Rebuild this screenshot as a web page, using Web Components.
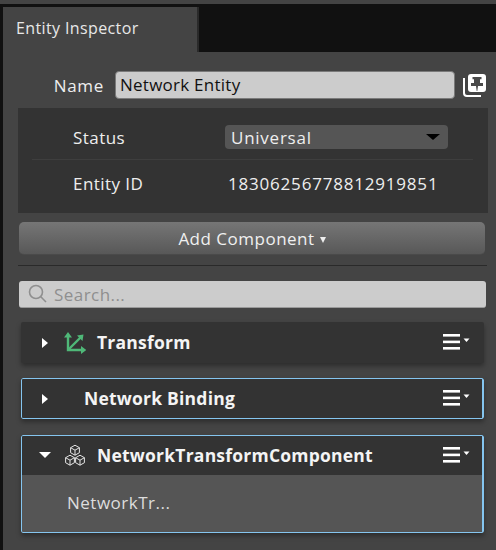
<!DOCTYPE html>
<html><head><meta charset="utf-8"><style>
html,body{margin:0;padding:0;width:496px;height:550px;overflow:hidden;background:#111;font-family:"Open Sans",sans-serif;color:#fff}
</style></head><body>
<ei-app></ei-app>
<script>
const def=(n,css,html)=>{customElements.define(n,class extends HTMLElement{connectedCallback(){if(this.shadowRoot)return;const s=this.attachShadow({mode:'open'});s.innerHTML='<style>'+css+'</style>'+(typeof html==='function'?html(this):html)}})};
const kebab=`<svg width="32" height="17" viewBox="0 0 32 17" style="display:block"><rect x="0" y="0" width="17" height="2.6" fill="#fff"/><rect x="0" y="6.6" width="17" height="2.6" fill="#fff"/><rect x="0" y="13" width="17" height="2.6" fill="#fff"/><path d="M20.5 4.5h6l-3 3.4z" fill="#fff"/></svg>`;
const icons={
 transform:`<svg width="22" height="22" viewBox="0 0 22 22" style="display:block"><g fill="none" stroke="#4fb878" stroke-width="2.4"><path d="M4 4v14h15"/><path d="M4 18L16.500 5.500"/></g><path d="M4 0l4 5.500h-8zM22.500 18l-5.500 4v-8zM19.500 2.500l-1 6.500-5.500-5.500z" fill="#4fb878"/></svg>`,
 cubes:`<svg width="22" height="22" viewBox="0 0 22 22" style="display:block"><g fill="none" stroke="#e4e4e4" stroke-width="1"><path d="M11 1.200l4.400 2.500v5L11 11.200 6.600 8.700v-5z"/><path d="M6.600 3.700L11 6.200l4.400-2.500M11 6.200v5"/><path d="M6 11.200l4.400 2.500v5L6 21.200l-4.400-2.500v-5z"/><path d="M1.600 13.700L6 16.200l4.400-2.500M6 16.200v5"/><path d="M16 11.200l4.400 2.500v5L16 21.200l-4.400-2.500v-5z"/><path d="M11.600 13.700l4.400 2.500 4.400-2.500M16 16.200v5"/></g></svg>`,
 none:`<span style="display:block;width:9px"></span>`
};
def('ei-tabbar',`:host{display:flex;height:48px;background:#111}
.t{width:196px;margin-top:3px;background:#444;font-size:16px;letter-spacing:.38px;color:#e8e8e8;padding:11px 0 0 13px;box-sizing:border-box;border-right:2px solid #2a2a2a;line-height:20px}`,`<div class="t"><slot></slot></div>`);
def('ei-name-row',`:host{display:flex;align-items:center;height:28px}
label{width:101px;text-align:right;font-size:17px;letter-spacing:.7px;color:#eee;margin-right:11px;white-space:nowrap}
.i{width:340px;height:28px;box-sizing:border-box;background:#ccc;border:1px solid #7a7a7a;border-radius:4px;color:#111;font-size:17px;line-height:25px;padding:0 4px;letter-spacing:.25px}
svg{margin-left:8px;display:block;flex:none}`,`<label>Name</label><div class="i"><slot></slot></div>
<svg width="23" height="23" viewBox="0 0 23 23"><path d="M1 4v15a3 3 0 0 0 3 3h14" fill="none" stroke="#fff" stroke-width="2"/><rect x="5" y="0" width="18" height="18" rx="3" fill="#fff"/><path d="M9.500 3h9v2.200h-1.500V9h3v3h-5l-.7 5h-.6L13 12H8V9h3V5.200H9.500z" fill="#4a4a4a"/></svg>`);
def('ei-props',`:host{display:block;margin:9px 8px 0 15px;background:#333;height:105px;box-sizing:border-box;padding-top:17px}`,`<slot></slot>`);
def('ei-prop',`:host{display:flex;align-items:center;height:24px;font-size:17px;color:#eee;letter-spacing:.45px}
label{width:152px;padding-left:55px;box-sizing:border-box;flex:none}`,t=>`<label>${t.getAttribute('label')}</label><slot></slot>`);
def('ei-select',`:host{display:flex;align-items:center;justify-content:space-between;width:223px;height:24px;box-sizing:border-box;margin-left:55px;padding:0 6px;background:#555;border-radius:4px;font-size:17px;letter-spacing:.75px;color:#eee}
i{display:block;width:0;height:0;border:7px solid transparent;border-top:6px solid #000;border-bottom:0;margin-right:2px}`,`<slot></slot><i></i>`);
def('ei-sep',`:host{display:block;height:1px;background:#3e3e3e;margin:10px 15px 11px 14px}`,``);
def('ei-button',`:host{display:flex;align-items:center;justify-content:center;margin:9px 11px 0 16px;height:33px;border-radius:5px;background:linear-gradient(#767676,#585858);font-size:17px;letter-spacing:.5px;color:#f0f0f0;border-bottom:1px solid #4a4a4a;box-sizing:border-box}
i{display:block;width:0;height:0;border:3.500px solid transparent;border-top:6px solid #eee;border-bottom:0;margin:3px 0 0 5px}`,`<slot></slot><i></i>`);
def('ei-rule',`:host{display:block;height:1px;background:#2a2a2a;margin:10px 9px 0 15px}`,``);
def('ei-search',`:host{display:flex;align-items:center;margin:15px 10px 0 16px;height:27px;box-sizing:border-box;background:#ccc;border-bottom:1px solid #999;border-radius:3px;color:#8f8f8f;font-size:17px;letter-spacing:.45px;padding-left:9px}
svg{display:block;margin-right:6px;flex:none}`,`<svg width="20" height="20" viewBox="0 0 20 20" fill="none" stroke="#8f8f8f" stroke-width="1.600"><circle cx="8" cy="8" r="6.500"/><path d="M12.800 12.800L18 18"/></svg><slot></slot>`);
def('ei-card',`:host{display:block;position:relative;margin:0 12px 0 18px;box-sizing:border-box;background:#333;border-radius:2px;box-shadow:0 3px 5px rgba(0,0,0,.35);overflow:hidden}
:host([sel])::after{content:"";position:absolute;inset:0;border:1px solid #85c5ef;border-right-width:2px;border-radius:2px;pointer-events:none}
.h{display:flex;align-items:center;height:41px}
:host([open]) .h{height:40px}
.a{width:0;height:0;flex:none}
.a.r{border-left:6px solid #fff;border-top:5.500px solid transparent;border-bottom:5.500px solid transparent;margin:0 16px 0 21px}
.a.d{border-top:6px solid #fff;border-left:6px solid transparent;border-right:6px solid transparent;margin:0 13px 0 18px}
.ic{flex:none;margin-right:11px}
b{font-size:17.500px;font-weight:700;letter-spacing:.22px;color:#f4f4f4;flex:1;white-space:nowrap;line-height:24px;margin-top:-1px}
:host([open]) b{margin-top:0}
.m{flex:none;margin-right:9px;width:32px}
.b{display:none;background:#555;height:58px;font-size:17px;color:#ddd;letter-spacing:.5px;padding-left:46px;line-height:56px}
:host([open]) .b{display:block}`,t=>{
 const open=t.hasAttribute('open');
 return `<div class="h"><span class="a ${open?'d':'r'}"></span><span class="ic">${icons[t.getAttribute('icon')||'none']}</span><b>${t.getAttribute('title')}</b><span class="m">${kebab}</span></div><div class="b"><slot></slot></div>`});
def('ei-app',`:host{display:block;width:496px;height:550px;background:#111}
.top{height:4px;background:#444}
.p{margin-left:3px;background:#444;height:498px;padding-top:19px;box-sizing:border-box}
.w{display:flex;flex-direction:column;gap:15px;margin-top:14px}
.w ei-card:last-child{margin-top:1px}`,`<div class="top"></div><div style="margin-left:3px"><ei-tabbar>Entity Inspector</ei-tabbar></div>
<div class="p">
<ei-name-row>Network Entity</ei-name-row>
<ei-props>
<ei-prop label="Status"><ei-select>Universal</ei-select></ei-prop>
<ei-sep></ei-sep>
<ei-prop label="Entity ID"><span style="margin-left:58px;letter-spacing:.8px">18306256778812919851</span></ei-prop>
</ei-props>
<ei-button>Add Component</ei-button>
<ei-rule></ei-rule>
<ei-search>Search...</ei-search>
<div class="w">
<ei-card icon="transform" title="Transform"></ei-card>
<ei-card sel title="Network Binding"></ei-card>
<ei-card sel open icon="cubes" title="NetworkTransformComponent">NetworkTr...</ei-card>
</div>
</div>`);
</script>
</body></html>
